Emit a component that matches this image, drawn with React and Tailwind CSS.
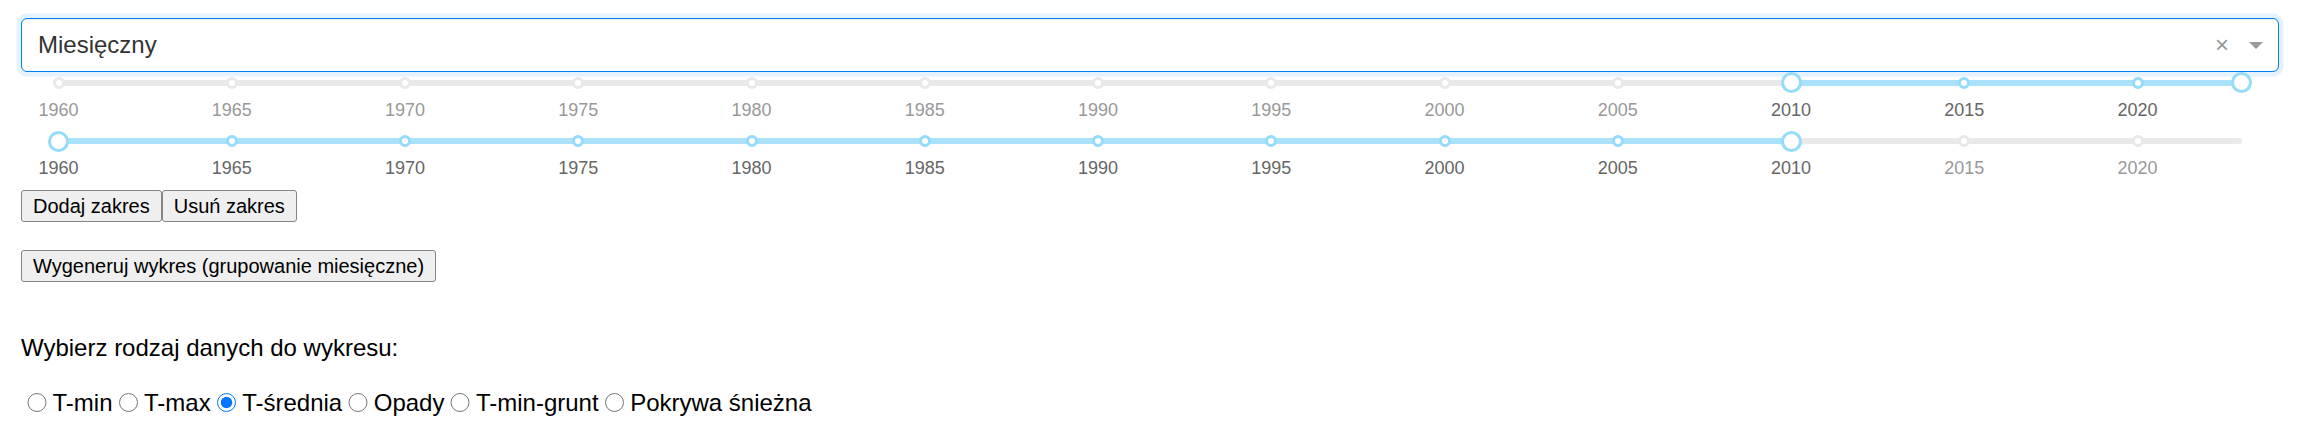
import { useState } from 'react';

const MIN = 1960;
const MAX = 2023;
const MARKS = [1960, 1965, 1970, 1975, 1980, 1985, 1990, 1995, 2000, 2005, 2010, 2015, 2020];

const pct = (v) => ((v - MIN) / (MAX - MIN)) * 100;

function RangeSlider({ value }) {
  const [lo, hi] = value;
  return (
    <div className="relative h-[58.5px] mx-[37.5px]">
      {/* rail + track */}
      <div className="absolute left-0 right-0 top-[7.5px] h-[6px] rounded-full bg-[#e9e9e9]" />
      <div
        className="absolute top-[7.5px] h-[6px] rounded-full bg-[#abe2fb]"
        style={{ left: `${pct(lo)}%`, width: `${pct(hi) - pct(lo)}%` }}
      />

      {/* dots */}
      {MARKS.map((m) => {
        const active = m >= lo && m <= hi;
        return (
          <span
            key={m}
            className={
              'absolute top-[4.5px] w-[12px] h-[12px] -ml-[6px] rounded-full bg-white border-[3px] ' +
              (active ? 'border-[#96dbfa]' : 'border-[#e9e9e9]')
            }
            style={{ left: `${pct(m)}%` }}
          />
        );
      })}

      {/* handles */}
      {[lo, hi].map((v, i) => (
        <span
          key={i}
          className="absolute top-0 w-[21px] h-[21px] -ml-[10.5px] rounded-full bg-white border-[3px] border-[#96dbfa]"
          style={{ left: `${pct(v)}%` }}
        />
      ))}

      {/* labels */}
      {MARKS.map((m) => {
        const active = m >= lo && m <= hi;
        return (
          <span
            key={'l' + m}
            className={
              'absolute top-[28.5px] -translate-x-1/2 text-[18px] leading-none ' +
              (active ? 'text-[#666]' : 'text-[#999]')
            }
            style={{ left: `${pct(m)}%` }}
          >
            {m}
          </span>
        );
      })}
    </div>
  );
}

const btn =
  'h-[32px] px-[11px] bg-[#efefef] border border-[#858585] rounded-[3px] text-[20px] leading-none text-black';

const OPTIONS = ['T-min', 'T-max', 'T-średnia', 'Opady', 'T-min-grunt', 'Pokrywa śnieżna'];

export default function App() {
  const [kind, setKind] = useState('T-średnia');

  return (
    <div className="pl-[21px] pr-[23px] pt-[18px] bg-white min-h-screen font-['Liberation_Sans',Arial,sans-serif] text-black">
      {/* dropdown */}
      <div className="flex items-center h-[54px] rounded-[6px] border border-[#007eff] bg-white shadow-[inset_0_1px_1px_rgba(0,0,0,0.075),0_0_0_4.5px_rgba(0,126,255,0.1)]">
        <span className="flex-1 pl-[16px] text-[24px] leading-none text-[#333]">Miesięczny</span>
        <span className="text-[24px] leading-none text-[#999] mr-[20px]">×</span>
        <span className="w-0 h-0 mr-[15px] border-x-[7px] border-x-transparent border-t-[7px] border-t-[#999]" />
      </div>

      <RangeSlider value={[2010, 2023]} />
      <RangeSlider value={[1960, 2010]} />

      <div className="flex mt-[0.5px]">
        <button className={btn}>Dodaj zakres</button>
        <button className={btn}>Usuń zakres</button>
      </div>

      <div className="mt-[28px]">
        <button className={btn}>Wygeneruj wykres (grupowanie miesięczne)</button>
      </div>

      <p className="mt-[54px] text-[24px] leading-none">Wybierz rodzaj danych do wykresu:</p>

      <div className="flex items-center mt-[31px] text-[24px] leading-none">
        {OPTIONS.map((o) => (
          <label key={o} className="inline-flex items-center">
            <input
              type="radio"
              name="kind"
              checked={kind === o}
              onChange={() => setKind(o)}
              className="w-[19.5px] h-[19.5px] m-0 ml-[6px] mr-[6px]"
            />
            {o}
          </label>
        ))}
      </div>
    </div>
  );
}
